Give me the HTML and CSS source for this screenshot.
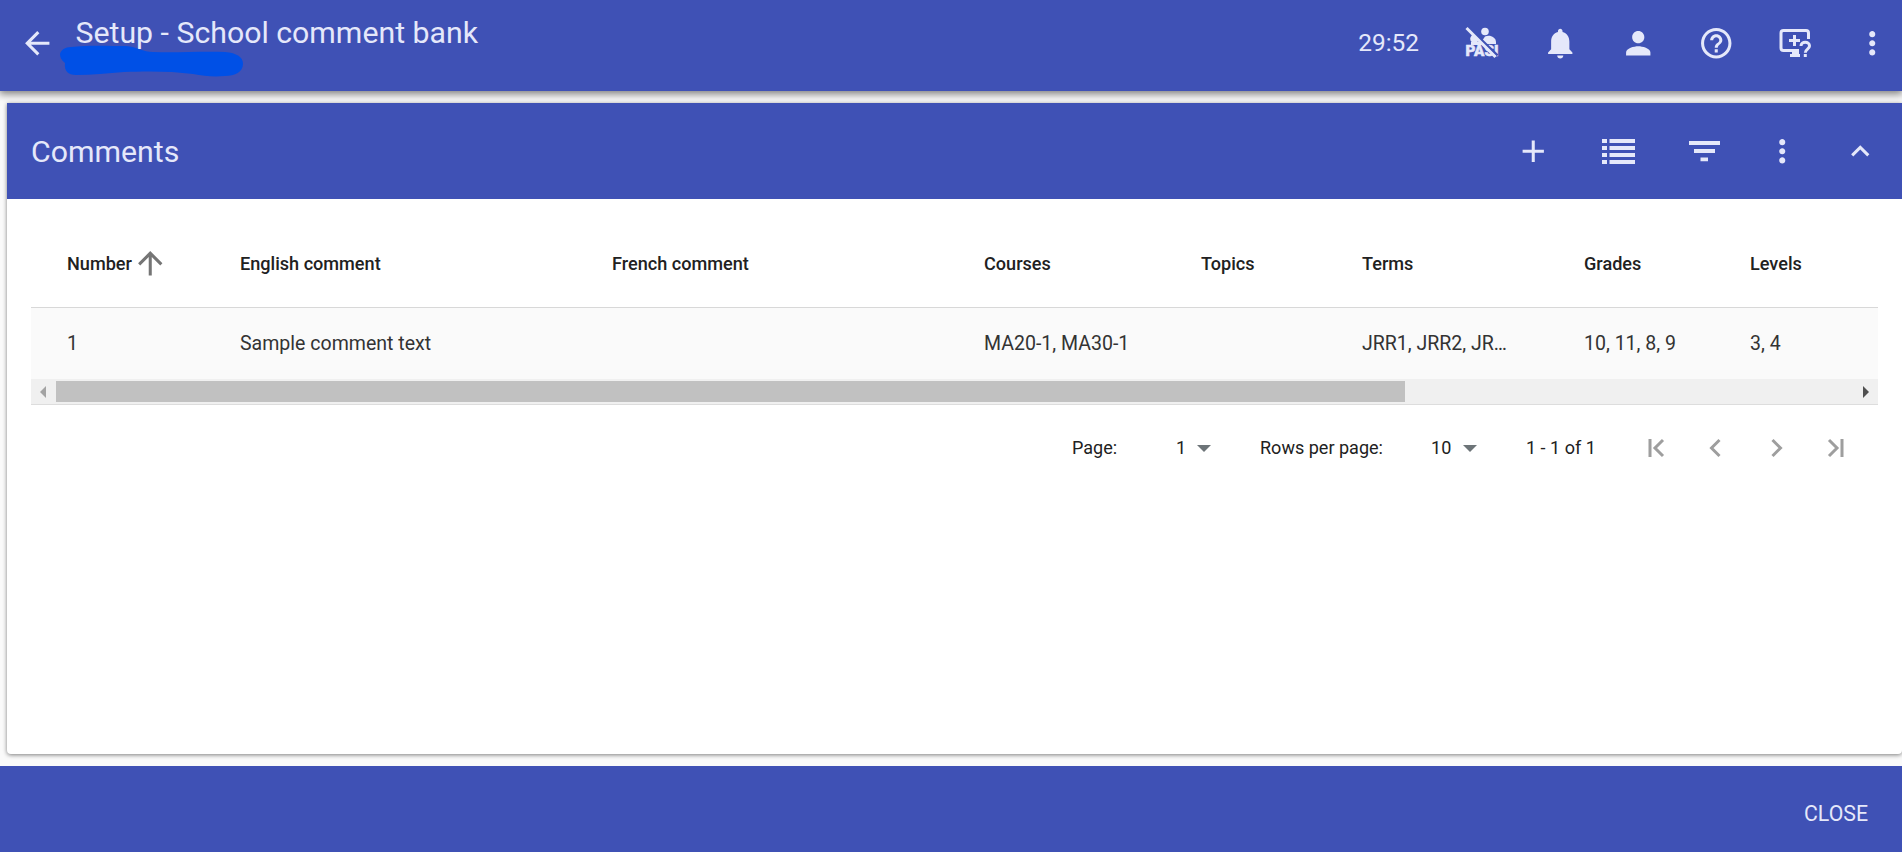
FILE: index.html
```html
<!DOCTYPE html>
<html lang="en">
<head>
<meta charset="utf-8">
<title>Setup - School comment bank</title>
<link rel="stylesheet" href="styles.css">
</head>
<body>
<header class="topbar">
  <svg class="icon back" viewBox="0 0 24 24"><path d="M20 11H7.83l5.59-5.59L12 4l-8 8 8 8 1.41-1.41L7.83 13H20v-2z"/></svg>
  <div class="heading">
    <h1 class="title">Setup - School comment bank</h1>
    <svg class="redaction" viewBox="0 0 184 32"><path d="M11 1C27-1 50 0 66 0c11 1 17 6 27 6 25 1 47-1 72 0 12 1 18 5 18 12 0 8-8 12-18 12-12 1-21 0-32-2-21-3-47-3-69-2-16 1-32 3-48 3C8 29 4 25 5 17 1 14 0 11 0 8 1 4 5 1 11 1z"/></svg>
  </div>
  <span class="timer">29:52</span>
  <svg class="pasi" viewBox="0 0 34 34">
    <circle cx="20" cy="5.500" r="3.800"/>
    <circle cx="9.500" cy="12.800" r="4.300"/>
    <path d="M20 10.500c5-2 10.500.5 11 5.500v2H17v-3z"/>
    <path d="M6 16h10l3 3H6z"/>
    <text x="0.500" y="30" textLength="33" lengthAdjust="spacingAndGlyphs">PASI</text>
    <path class="slash-gap" d="M3.500 1.500l29 28"/>
    <path class="slash" d="M1.500 2l29 29"/>
  </svg>
  <svg class="icon bell" viewBox="0 0 24 24"><path d="M12 22c1.100 0 2-.9 2-2h-4c0 1.100.89 2 2 2zm6-6v-5c0-3.070-1.640-5.640-4.500-6.320V4c0-.83-.67-1.500-1.500-1.500s-1.500.67-1.500 1.500v.68C7.630 5.360 6 7.920 6 11v5l-2 2v1h16v-1l-2-2z"/></svg>
  <svg class="icon person" viewBox="0 0 24 24"><path d="M12 12c2.210 0 4-1.790 4-4s-1.790-4-4-4-4 1.790-4 4 1.790 4 4 4zm0 2c-2.670 0-8 1.340-8 4v2h16v-2c0-2.660-5.330-4-8-4z"/></svg>
  <svg class="icon help" viewBox="0 0 24 24"><path d="M11 18h2v-2h-2v2zm1-16C6.480 2 2 6.480 2 12s4.480 10 10 10 10-4.480 10-10S17.520 2 12 2zm0 18c-4.410 0-8-3.590-8-8s3.590-8 8-8 8 3.590 8 8-3.590 8-8 8zm0-14c-2.210 0-4 1.790-4 4h2c0-1.100.9-2 2-2s2 .9 2 2c0 2-3 1.750-3 5h2c0-2.250 3-2.500 3-5 0-2.210-1.790-4-4-4z"/></svg>
  <svg class="remote" viewBox="0 0 32 28">
    <path class="line" d="M29.500 10V4Q29.500 1.500 27 1.500H4.500Q2 1.500 2 4v15q0 2.500 2.500 2.500H20"/>
    <path class="line" d="M15.500 6v11M10 11.500h11"/>
    <path d="M13 22h7v3h1v3H11v-3h2z"/>
    <path class="line" d="M22 17c0-5 8.500-5 8.500 0 0 3.200-4.200 3-4.200 6.700M26.300 25v3"/>
  </svg>
  <svg class="icon more" viewBox="0 0 24 24"><path d="M12 8c1.100 0 2-.9 2-2s-.9-2-2-2-2 .9-2 2 .9 2 2 2zm0 2c-1.100 0-2 .9-2 2s.9 2 2 2 2-.9 2-2-.9-2-2-2zm0 6c-1.100 0-2 .9-2 2s.9 2 2 2 2-.9 2-2-.9-2-2-2z"/></svg>
</header>

<main class="card">
  <div class="cardbar">
    <h2 class="cardtitle">Comments</h2>
    <svg class="icon add" viewBox="0 0 24 24"><path d="M19 13h-6v6h-2v-6H5v-2h6V5h2v6h6v2z"/></svg>
    <svg class="list" viewBox="0 0 33 25"><path d="M0 0h5v4H0zM7.500 0H33v4H7.500zM0 7h5v4H0zM7.500 7H33v4H7.500zM0 14h5v4H0zM7.500 14H33v4H7.500zM0 21h5v4H0zM7.500 21H33v4H7.500z"/></svg>
    <svg class="filter" viewBox="0 0 31 20"><path d="M0 0h31v4H0zM5 8h21v4H5zM11.500 16.500H19v3.700h-7.500z"/></svg>
    <svg class="icon cardmore" viewBox="0 0 24 24"><path d="M12 8c1.100 0 2-.9 2-2s-.9-2-2-2-2 .9-2 2 .9 2 2 2zm0 2c-1.100 0-2 .9-2 2s.9 2 2 2 2-.9 2-2-.9-2-2-2zm0 6c-1.100 0-2 .9-2 2s.9 2 2 2 2-.9 2-2-.9-2-2-2z"/></svg>
    <svg class="icon collapse" viewBox="0 0 24 24"><path d="M12 8l-6 6 1.410 1.410L12 10.830l4.590 4.580L18 14z"/></svg>
  </div>
  <section class="tablewrap">
    <div class="row head">
      <span class="sorted">Number<svg class="icon" viewBox="0 0 24 24"><path d="M4 12l1.410 1.410L11 7.830V20h2V7.830l5.580 5.590L20 12l-8-8-8 8z"/></svg></span>
      <span>English comment</span><span>French comment</span><span>Courses</span><span>Topics</span><span>Terms</span><span>Grades</span><span>Levels</span>
    </div>
    <div class="row data">
      <span>1</span><span>Sample comment text</span><span></span><span>MA20-1, MA30-1</span><span></span><span>JRR1, JRR2, JR…</span><span>10, 11, 8, 9</span><span>3, 4</span>
    </div>
    <div class="scrollbar">
      <svg class="arrow left" viewBox="0 0 6 12"><path d="M6 0v12L0 6z"/></svg>
      <div class="thumb"></div>
      <svg class="arrow right" viewBox="0 0 6 12"><path d="M0 0v12l6-6z"/></svg>
    </div>
  </section>
  <div class="pager">
    <span class="pagelabel">Page:</span>
    <span class="pagevalue">1</span>
    <svg class="caret" viewBox="0 0 14 7"><path d="M0 0h14L7 7z"/></svg>
    <span class="rowslabel">Rows per page:</span>
    <span class="rowsvalue">10</span>
    <svg class="caret" viewBox="0 0 14 7"><path d="M0 0h14L7 7z"/></svg>
    <span class="range">1 - 1 of 1</span>
    <svg class="nav first" viewBox="0 0 16 18"><path d="M2 0v18M15 1L7 9l8 8"/></svg>
    <svg class="nav prev" viewBox="0 0 11 18"><path d="M9.500 1l-8 8 8 8"/></svg>
    <svg class="nav next" viewBox="0 0 11 18"><path d="M1.500 1l8 8-8 8"/></svg>
    <svg class="nav last" viewBox="0 0 16 18"><path d="M14 0v18M1 1l8 8-8 8"/></svg>
  </div>
</main>
<footer class="footer"><span class="close">CLOSE</span></footer>
</body>
</html>
```

FILE: styles.css
```css
* { box-sizing: border-box; }
body {
  margin: 0;
  height: 852px;
  overflow: hidden;
  display: flex;
  flex-direction: column;
  background: #fafafa;
  color: #212121;
  font-family: Roboto, "Liberation Sans", sans-serif;
}
svg { display: block; flex: none; fill: currentColor; overflow: visible; }
h1, h2 { margin: 0; font-weight: 400; font-size: 30.25px; line-height: 36px; white-space: nowrap; }
.icon { width: 36.5px; height: 36.5px; }

.topbar {
  height: 91px;
  flex: none;
  display: flex;
  align-items: center;
  padding: 0 12px 5px 19px;
  background: #3f51b5;
  color: #e5e8fa;
  box-shadow: 0 2px 8px 1px rgba(0, 0, 0, .5);
}
.heading { margin-left: 20px; height: 86px; padding-top: 15px; flex: 1; position: relative; }
.redaction { position: absolute; left: -16px; top: 46px; width: 184px; height: 32px; fill: #0050e6; }
.timer { font-size: 24.4px; margin-right: 46px; padding-bottom: 1px; }
.pasi { width: 34px; height: 34px; margin-right: 43px; }
.pasi text { font: 900 14.500px Roboto, sans-serif; stroke: currentColor; stroke-width: .5; }
.pasi .slash { stroke: currentColor; stroke-width: 3; }
.pasi .slash-gap { stroke: #3f51b5; stroke-width: 2.500; }
.bell, .person { margin-right: 41.500px; }
.help { margin-right: 44px; }
.remote { width: 32px; height: 28px; margin-right: 43px; }
.line { fill: none; stroke: currentColor; stroke-width: 3; }

.card {
  width: 1895px;
  height: 651px;
  flex: none;
  margin: 12px 0 12px 7px;
  background: #fff;
  border-radius: 0 0 4px 4px;
  box-shadow: 0 1px 4px rgba(0, 0, 0, .5);
}
.cardbar {
  height: 96px;
  display: flex;
  align-items: center;
  padding: 0 24px;
  background: #3f51b5;
  color: #e5e8fa;
}
.cardtitle { flex: 1; padding-top: 2px; }
.add { margin-right: 50px; }
.list { width: 33px; height: 25px; margin-right: 54px; }
.filter { width: 31px; height: 20px; margin-right: 44px; }
.cardmore { margin-right: 41.500px; }

.tablewrap { margin: 0 24px; border-bottom: 1px solid #ddd; }
.row {
  display: grid;
  grid-template-columns: 173px 372px 372px 217px 161px 222px 166px 1fr;
  align-items: center;
  padding-left: 36px;
  white-space: nowrap;
}
.head { height: 109px; padding-top: 21px; border-bottom: 1px solid #d8d8d8; font-size: 18.100px; font-weight: 500; }
.head .icon { color: #757575; }
.sorted { display: flex; align-items: center; }
.data { height: 71px; background: #fafafa; font-size: 19.550px; color: #333; }
.scrollbar { height: 25px; display: flex; align-items: center; padding: 0 9px; background: #f0f0f0; }
.thumb { width: 1349px; height: 21px; margin-left: 10px; background: #c1c1c1; }
.arrow { width: 6px; height: 12px; }
.left { color: #a3a3a3; }
.right { color: #505050; margin-left: auto; }

.pager { height: 86px; display: flex; align-items: center; padding-left: 1065px; font-size: 18.050px; white-space: nowrap; }
.pager span { padding-bottom: 1px; }
.pagelabel { width: 104px; }
.pagevalue { width: 21px; }
.caret { width: 14px; height: 7px; color: #6d7478; }
.rowslabel { margin-left: 49px; width: 171px; }
.rowsvalue { width: 32px; }
.range { margin-left: 49px; width: 122px; }
.nav { height: 18px; fill: none; stroke: #9e9e9e; stroke-width: 3; }
.first, .last { width: 16px; }
.prev, .next { width: 11px; }
.prev { margin-left: 46px; }
.next { margin-left: 50px; }
.last { margin-left: 46px; }

.footer {
  height: 86px;
  flex: none;
  display: flex;
  align-items: center;
  justify-content: flex-end;
  padding: 9px 34px 0 0;
  background: #3f51b5;
  color: #e5e8fa;
  font-size: 21.280px;
}
```
